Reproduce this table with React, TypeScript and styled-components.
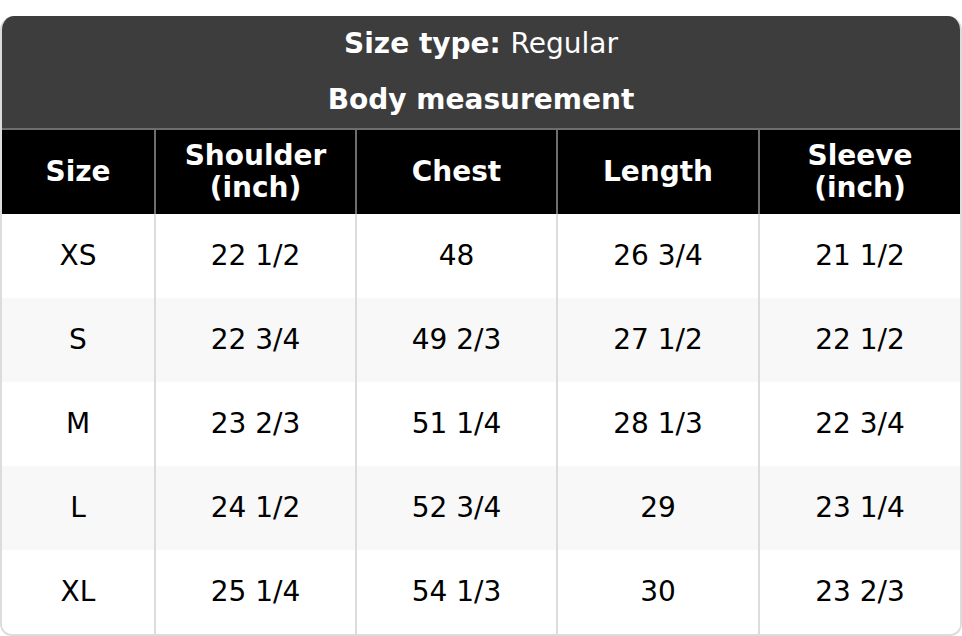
import React from "react";
import styled, { createGlobalStyle } from "styled-components";

const Global = createGlobalStyle`
  html, body { margin: 0; padding: 0; background: #ffffff; }
  body { font-family: "DejaVu Sans", "Liberation Sans", sans-serif; }
`;

const Page = styled.div`
  padding-top: 16px;
`;

const Frame = styled.div`
  width: 962px;
  box-sizing: border-box;
  border-radius: 14px 14px 12px 12px;
  overflow: hidden;
  border: 2px solid #dcdcdc;
  border-top: none;
`;

const Table = styled.table`
  width: 100%;
  border-collapse: separate;
  border-spacing: 0;
  table-layout: fixed;
  font-size: 28px;
  line-height: 32px;
`;

const TitleCell = styled.th<{ $bottom?: boolean }>`
  background: #3d3d3d;
  color: #ffffff;
  height: ${(p) => (p.$bottom ? "58px" : "56px")};
  padding: 0;
  box-sizing: border-box;
  text-align: center;
  vertical-align: middle;
  font-weight: bold;
  border-bottom: ${(p) => (p.$bottom ? "2px solid #6e6e6e" : "none")};
`;

const Light = styled.span`
  font-weight: normal;
`;

const HeadCell = styled.th`
  background: #000000;
  color: #ffffff;
  font-weight: bold;
  text-align: center;
  vertical-align: middle;
  height: 84px;
  padding: 8px 4px;
  box-sizing: border-box;
  border-right: 2px solid #6e6e6e;
  &:last-child { border-right: none; }
`;

const Row = styled.tr<{ $alt: boolean }>`
  background: ${(p) => (p.$alt ? "#f8f8f8" : "#ffffff")};
`;

const Cell = styled.td`
  color: #000000;
  text-align: center;
  vertical-align: middle;
  height: 84px;
  padding: 0;
  box-sizing: border-box;
  border-right: 2px solid #dcdcdc;
  &:last-child { border-right: none; }
`;

const cols = [154, 201, 201, 202, 200];

const headers = [
  ["Size"],
  ["Shoulder", "(inch)"],
  ["Chest"],
  ["Length"],
  ["Sleeve", "(inch)"],
];

const rows = [
  ["XS", "22 1/2", "48", "26 3/4", "21 1/2"],
  ["S", "22 3/4", "49 2/3", "27 1/2", "22 1/2"],
  ["M", "23 2/3", "51 1/4", "28 1/3", "22 3/4"],
  ["L", "24 1/2", "52 3/4", "29", "23 1/4"],
  ["XL", "25 1/4", "54 1/3", "30", "23 2/3"],
];

export default function App() {
  return (
    <Page>
      <Global />
      <Frame>
        <Table>
          <colgroup>
            {cols.map((w, i) => (
              <col key={i} style={{ width: w }} />
            ))}
          </colgroup>
          <thead>
            <tr>
              <TitleCell colSpan={5}>
                Size type: <Light>Regular</Light>
              </TitleCell>
            </tr>
            <tr>
              <TitleCell colSpan={5} $bottom>
                Body measurement
              </TitleCell>
            </tr>
            <tr>
              {headers.map((h, i) => (
                <HeadCell key={i}>
                  {h.map((line, j) => (
                    <React.Fragment key={j}>
                      {j > 0 && <br />}
                      {line}
                    </React.Fragment>
                  ))}
                </HeadCell>
              ))}
            </tr>
          </thead>
          <tbody>
            {rows.map((r, i) => (
              <Row key={i} $alt={i % 2 === 1}>
                {r.map((v, j) => (
                  <Cell key={j}>{v}</Cell>
                ))}
              </Row>
            ))}
          </tbody>
        </Table>
      </Frame>
    </Page>
  );
}
